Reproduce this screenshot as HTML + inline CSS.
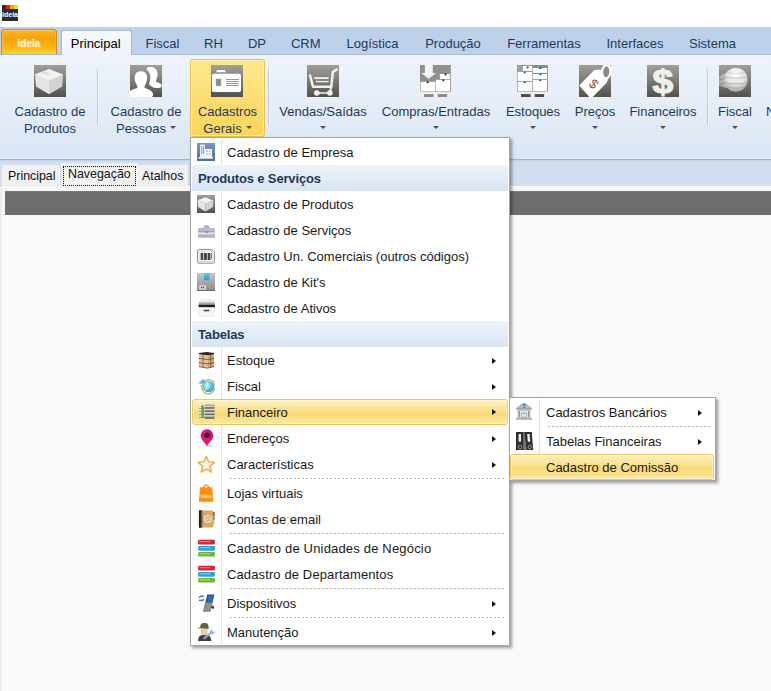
<!DOCTYPE html>
<html lang="pt-BR">
<head>
<meta charset="utf-8">
<title>ideia</title>
<style>
*{box-sizing:border-box;margin:0;padding:0}
html,body{width:771px;height:691px;overflow:hidden;background:#f8f8f8}
body{position:relative;font-family:"Liberation Sans",sans-serif;font-size:13px;color:#1e395b}
.abs{position:absolute}
#title{left:0;top:0;width:771px;height:27px;background:#fff}
#tabs{left:0;top:27px;width:771px;height:28px;background:#bdd1ea}
#rib{left:0;top:54px;width:771px;height:105px;background:linear-gradient(#eef3fa 0,#e6eef8 40%,#dbe6f4 100%);border-top:1px solid #a3bcdc}
#ribline{left:0;top:159px;width:771px;height:1px;background:#9bb4d6}
#ribline2{left:0;top:160px;width:771px;height:3px;background:linear-gradient(#c3d3e8,#d6e2f1)}
#under{left:0;top:163px;width:771px;height:25px;background:#d1deee}
.tab{position:absolute;top:30px;height:24px;line-height:27px;text-align:center;white-space:nowrap;color:#1e395b;font-size:13px}
.rb{position:absolute;top:59px;height:78px;text-align:center;white-space:nowrap;color:#1e395b;font-size:13px;line-height:17px}
.rb .ic{position:absolute;left:50%;margin-left:-16px;top:6px;width:32px;height:32px;background:linear-gradient(#8c8c8c,#6f6f6d 50%,#4f4f4c);overflow:hidden}
.rb .tx{position:absolute;left:-40px;right:-40px;top:44px;line-height:17px}
.hot{background:linear-gradient(#fde88f 0,#fddf77 45%,#fcd458 100%);border:1px solid #e9bf50;border-radius:3px;box-shadow:inset 0 0 0 1px rgba(255,245,200,.6)}
.lt{font-size:12.4px;color:#111;white-space:nowrap}.lt span{position:absolute;line-height:16px}
.hot .ic{top:5px;margin-left:-16.5px}.hot .tx{top:43px}
.rb .nobg{background:none}
.arr{display:inline-block;width:0;height:0;border-left:3px solid transparent;border-right:3px solid transparent;border-top:3.4px solid #505050;vertical-align:middle;margin-left:4px;position:relative;top:-2px}
.sep{position:absolute;top:69px;width:1px;height:56px;background:#b9c9df;box-shadow:1px 0 0 #f4f8fc}
.menu{position:absolute;background:#fff;border:1px solid #a0a6ae;box-shadow:2px 2px 3px rgba(0,0,0,.38)}
.mi{position:absolute;left:1px;height:26px;line-height:26px;color:#1a1a1a;white-space:nowrap}
.mi .t{position:absolute;left:35px;top:1px}
.mi.hl .t{left:34px;top:0}.mi.hl .i{left:4px;top:3px}.mi.hl .sub{top:9px;margin-left:-1px}
.mi .i{position:absolute;left:5px;top:4px;width:18px;height:18px}
.mh{position:absolute;left:1px;height:26px;line-height:28px;letter-spacing:-.15px;background:linear-gradient(#edf3fb,#d9e4f1);font-weight:bold;color:#1e395b;padding-left:6px}
.gut{position:absolute;left:30px;width:1px;background:#dfe3e8}
.ms{position:absolute;height:1px;background-image:repeating-linear-gradient(90deg,#b8b8b8 0,#b8b8b8 2px,transparent 2px,transparent 4px)}
.sub{position:absolute;width:0;height:0;border-top:3.5px solid transparent;border-bottom:3.5px solid transparent;border-left:4px solid #111;top:10.5px}
.hl{background:linear-gradient(#fdf0bf 0,#fbe397 35%,#f9da78 58%,#fbe18e 82%,#fdebab 100%);border:1px solid #efc75c;border-radius:3px;box-shadow:inset 0 0 0 1px rgba(255,250,220,.55)}
</style>
</head>
<body>
<div id="title" class="abs"></div>
<div id="tabs" class="abs"></div>
<div id="rib" class="abs"></div>
<div id="ribline" class="abs"></div>
<div id="ribline2" class="abs"></div>
<div id="under" class="abs"></div>
<svg class="abs" style="left:2px;top:5px" width="16" height="16" viewBox="0 0 16 16"><rect width="16" height="16" fill="#2e2b2c"/><rect x="4" y="0" width="4" height="4" fill="#e8261a"/><rect x="8" y="0" width="4" height="4" fill="#f6a313"/><rect x="12" y="0" width="4" height="4" fill="#f9dc1c"/><text x="8" y="12.4" font-family="Liberation Sans, sans-serif" font-size="8" font-weight="bold" fill="#fff" text-anchor="middle" textLength="16" lengthAdjust="spacingAndGlyphs">ideia</text></svg>

<div class="abs" id="appbtn" style="left:1px;top:29px;width:56px;height:25px;border:1px solid #e1840f;border-bottom:none;border-radius:4px 4px 0 0;background:linear-gradient(#f8b42a 0,#f8a50b 35%,#faae10 65%,#ffd21e 100%);box-shadow:inset 0 1px 0 rgba(255,215,130,.7),inset 1px 0 0 rgba(255,200,90,.5),inset -1px 0 0 rgba(255,200,90,.5);color:#ffefc4;font-weight:bold;font-size:10px;line-height:27px;text-align:center;text-shadow:0 0 2px rgba(255,255,255,.75)">ideia</div>
<div class="abs" id="ptab" style="left:61px;top:30px;width:71px;height:25px;border:1px solid #a3bcdc;border-bottom:none;border-radius:3px 3px 0 0;background:linear-gradient(#f7fafd,#eef3fa)"></div>
<div class="tab" style="left:45.7px;width:100px;color:#000">Principal</div>
<div class="tab" style="left:112.5px;width:100px;color:#1e395b">Fiscal</div>
<div class="tab" style="left:163.5px;width:100px;color:#1e395b">RH</div>
<div class="tab" style="left:207.0px;width:100px;color:#1e395b">DP</div>
<div class="tab" style="left:255.8px;width:100px;color:#1e395b">CRM</div>
<div class="tab" style="left:322.6px;width:100px;color:#1e395b">Logística</div>
<div class="tab" style="left:403.0px;width:100px;color:#1e395b">Produção</div>
<div class="tab" style="left:494.0px;width:100px;color:#1e395b">Ferramentas</div>
<div class="tab" style="left:585.0px;width:100px;color:#1e395b">Interfaces</div>
<div class="tab" style="left:662.5px;width:100px;color:#1e395b">Sistema</div>

<!--RIBBON--><svg width="0" height="0" style="position:absolute"><defs><linearGradient id="gbg" x1="0" y1="0" x2="0" y2="1"><stop offset="0" stop-color="#a09f9a"/><stop offset="0.5" stop-color="#7b7a75"/><stop offset="1" stop-color="#51514c"/></linearGradient></defs></svg>
<div class="rb" style="left:20.0px;width:60px"><svg class="ic" viewBox="0 0 32 32" width="32" height="32"><rect width="32" height="32" fill="url(#gbg)"/><polygon points="15,4 29,9.5 15,15.3 1,9.3" fill="#f3f3f3"/><polygon points="1,9.3 15,15.3 15,29.3 2,21.5" fill="#e4e4e4"/><polygon points="15,15.3 29,9.5 28.3,21.5 15,29.3" fill="#d2d2d2"/><polygon points="6.5,7.2 9.5,6 17,9.2 14,10.6" fill="#dcdcdc"/><path d="M1,9.3 L15,15.3 L29,9.5" stroke="#fafafa" stroke-width=".6" fill="none"/></svg><div class="tx">Cadastro de<br>Produtos</div></div>
<div class="rb" style="left:116.0px;width:60px"><svg class="ic" viewBox="0 0 32 32" width="32" height="32"><rect width="32" height="32" fill="url(#gbg)"/><defs><mask id="mpp"><rect width="32" height="32" fill="#fff"/><path d="M0,32 L0,26 C1,25 4,24 6,23.6 C8,23 7.6,21.5 6.5,19.5 C4,15 4,9.5 7,7.3 C9.5,5.6 13,5.8 15,7.6 C18,10 17.6,15.5 15.3,19.5 C14.2,21.5 14,23 16,23.6 C19,24.3 22,26 23,28.5 C23.3,30 22.8,31 22,32 Z" fill="#000" stroke="#000" stroke-width="6.4"/></mask></defs><path d="M16.5,3.5 C18,1.8 22,1.5 25,3.5 C28,5.5 28.3,10 26.5,14 C25.5,16 25.8,17 27.5,17.6 C30,18.3 31.8,19.5 32,20.5 C32,22.5 29,23.2 26,23 C23,22.8 21,21.5 19,19 Z" fill="#fff" mask="url(#mpp)"/><path d="M0,32 L0,26 C1,25 4,24 6,23.6 C8,23 7.6,21.5 6.5,19.5 C4,15 4,9.5 7,7.3 C9.5,5.6 13,5.8 15,7.6 C18,10 17.6,15.5 15.3,19.5 C14.2,21.5 14,23 16,23.6 C19,24.3 22,26 23,28.5 C23.3,30 22.8,31 22,32 Z" fill="#fff"/></svg><div class="tx">Cadastro de<br>Pessoas<i class='arr'></i></div></div>
<div class="rb hot" style="left:190.0px;width:75px"><svg class="ic" viewBox="0 0 32 32" width="32" height="32"><rect width="32" height="32" fill="url(#gbg)"/><polygon points="5,7.3 6.3,4.9 13.8,4.9 15.1,7.3" fill="#fff"/><rect x="0.9" y="8.8" width="29.1" height="18.3" rx="1.8" fill="#fff"/><rect x="5" y="14" width="4.9" height="6.9" fill="#8f8e8a" stroke="#a5a4a0" stroke-width=".5"/><g fill="#8f8e8a"><rect x="15" y="14.1" width="12.9" height=".9"/><rect x="15" y="16.1" width="12.9" height=".9"/><rect x="15" y="18.1" width="12.9" height=".9"/><rect x="15" y="20.1" width="12.9" height=".9"/></g></svg><div class="tx">Cadastros<br>Gerais<i class='arr'></i></div></div>
<div class="rb" style="left:293.0px;width:60px"><svg class="ic" viewBox="0 0 32 32" width="32" height="32"><rect width="32" height="32" fill="url(#gbg)"/><g fill="none" stroke="#f1f1f1" stroke-linecap="round" stroke-linejoin="round"><path d="M3.1,10.5 L6,21.8 L24.3,21.8 L25.8,6.8 L29.7,4.5" stroke-width="2.5"/><path d="M24.3,21.8 L23,27" stroke-width="2"/><path d="M7.2,13.1 H21.6" stroke-width="1.9" stroke-linecap="butt"/><path d="M9,16.6 H21.6" stroke-width="1.4" stroke-linecap="butt"/><path d="M9.8,28 H22.9" stroke-width="1.7"/></g><circle cx="9.8" cy="28" r="2.8" fill="#f1f1f1"/><circle cx="22.9" cy="28" r="2.8" fill="#f1f1f1"/></svg><div class="tx">Vendas/Saídas<br><i class='arr' style='margin-left:0'></i></div></div>
<div class="rb" style="left:406.0px;width:60px"><svg class="ic nobg" viewBox="0 0 32 32" width="32" height="32"><rect x="0" y="0" width="30.8" height="26.8" fill="#91908b"/><rect x="0" y="26.8" width="30.8" height="5.2" fill="#f0f0f0"/><rect x="4" y="29.1" width="9.6" height="2.9" fill="#8b8a86"/><rect x="17.7" y="29.1" width="9.4" height="2.9" fill="#8b8a86"/><polygon points="4.9,0 12.8,0 12.8,8.1 16.3,8.1 8.6,13.7 1.2,8.1 4.9,8.1" fill="#eef4fc"/><g fill="#fff"><rect x="0.6" y="16.8" width="14.7" height="9.4"/><rect x="15.8" y="14.8" width="14.2" height="11.4"/><rect x="19.9" y="9" width="10.1" height="5"/></g><g fill="#1c1c1c"><circle cx="7.7" cy="17.3" r="1"/><circle cx="23.3" cy="15.3" r="1"/><circle cx="25.5" cy="9.4" r="1"/></g></svg><div class="tx">Compras/Entradas<br><i class='arr' style='margin-left:0'></i></div></div>
<div class="rb" style="left:503.0px;width:60px"><svg class="ic nobg" viewBox="0 0 32 32" width="32" height="32"><rect x="0" y="0" width="30.8" height="26.8" fill="#8c8b87"/><rect x="0.6" y="0.6" width="5.2" height="5.4" fill="#a3a29e"/><rect x="0" y="26.8" width="30.8" height="5.2" fill="#f0f0f0"/><rect x="4" y="29.1" width="9.6" height="2.9" fill="#4b4b47"/><rect x="17.7" y="29.1" width="9.4" height="2.9" fill="#4b4b47"/><g fill="#fff"><rect x="5.9" y="0.9" width="9.3" height="5"/><rect x="0.6" y="6.8" width="14.6" height="9.3"/><rect x="0.6" y="16.9" width="14.6" height="9.3"/><rect x="15.8" y="3" width="14.2" height="4.9"/><rect x="15.8" y="9" width="14.2" height="5"/><rect x="15.8" y="14.8" width="14.2" height="11.4"/></g><g fill="#0b64a0"><ellipse cx="10.6" cy="2.5" rx="1.2" ry=".9"/><ellipse cx="7.7" cy="7.3" rx="1.2" ry=".9"/><ellipse cx="7.7" cy="17.3" rx="1.2" ry=".9"/><ellipse cx="23.5" cy="3.2" rx="1.2" ry=".9"/><ellipse cx="23.5" cy="9.3" rx="1.2" ry=".9"/><ellipse cx="23.3" cy="15.3" rx="1.2" ry=".9"/></g></svg><div class="tx">Estoques<br><i class='arr' style='margin-left:0'></i></div></div>
<div class="rb" style="left:565.0px;width:60px"><svg class="ic" viewBox="0 0 32 32" width="32" height="32"><rect width="32" height="32" fill="url(#gbg)"/><polygon points="15.3,5 21.8,4.6 29.3,13.5 27.4,18 13.8,32 10.4,32 0.8,21.2 0.8,19.8" fill="#fff"/><ellipse cx="27.3" cy="6.8" rx="4.2" ry="6.6" transform="rotate(6 27.3 6.8)" fill="#8b8a85" stroke="#fff" stroke-width="2.3"/><polygon points="19,8 22.6,13.4 28.6,14.8 27.4,18 21,12" fill="#fff"/><text x="14.7" y="19" transform="rotate(40 14.7 19)" font-family="Liberation Sans, sans-serif" font-size="13" fill="#64635f" text-anchor="middle" dominant-baseline="central">$</text></svg><div class="tx">Preços<br><i class='arr' style='margin-left:0'></i></div></div>
<div class="rb" style="left:633.0px;width:60px"><svg class="ic" viewBox="0 0 32 32" width="32" height="32"><rect width="32" height="32" fill="url(#gbg)"/><text x="16" y="27.8" transform="translate(16 0) scale(1.13 1) translate(-16 0)" font-family="Liberation Sans, sans-serif" font-weight="bold" font-size="33" fill="#efefef" stroke="#efefef" stroke-width="1.1" stroke-linejoin="round" text-anchor="middle">$</text></svg><div class="tx">Financeiros<br><i class='arr' style='margin-left:0'></i></div></div>
<div class="rb" style="left:705.0px;width:60px"><svg class="ic" viewBox="0 0 32 32" width="32" height="32"><rect width="32" height="32" fill="url(#gbg)"/><defs><radialGradient id="gsp" cx="0.5" cy="0.3" r="0.75"><stop offset="0" stop-color="#ffffff"/><stop offset="0.55" stop-color="#e1e1e1"/><stop offset="1" stop-color="#9c9c9a"/></radialGradient><linearGradient id="gtail" x1="0" y1="0" x2="1" y2="0"><stop offset="0" stop-color="#c8c8c8" stop-opacity=".55"/><stop offset="1" stop-color="#d8d8d8" stop-opacity=".9"/></linearGradient></defs><path d="M0,12 C4,8 8,7.5 12,7 L12,24 C8,23 4,22 0,21 Z" fill="url(#gtail)"/><ellipse cx="16.9" cy="14.8" rx="11.7" ry="12" fill="url(#gsp)"/><g stroke="#9a9a98" stroke-opacity=".55" fill="none"><path d="M5.5,12 C12,13.6 22,13.6 28.3,12" stroke-width="1"/><path d="M5.3,17.5 C12,19 22,19 28.4,17.5" stroke-width="1.2"/><path d="M7.5,22 C13,23.4 21,23.4 26.4,22" stroke-width=".9"/><path d="M8,7.5 C13,8.8 21,8.8 25.8,7.5" stroke-width=".7"/></g><path d="M0,14.5 L6,13.5 M0,19 L6,18.5" stroke="#777" stroke-opacity=".5" stroke-width="1"/></svg><div class="tx">Fiscal<br><i class='arr' style='margin-left:0'></i></div></div>
<div class="sep" style="left:97px"></div>
<div class="sep" style="left:268px"></div>
<div class="sep" style="left:707px"></div>
<div class="rb" style="left:766px;width:20px"><div class="tx" style="left:0;right:auto;text-align:left">N</div></div>
<!--/RIBBON-->
<!--LOWER--><div class="abs" style="left:0;top:186px;width:771px;height:505px;background:#f9f9f9"></div>
<div class="abs" style="left:0;top:186px;width:771px;height:5px;background:#f6f6f6"></div>
<div class="abs" style="left:0;top:186px;width:2px;height:505px;background:#ededed"></div>
<div class="abs" style="left:2px;top:186px;width:3px;height:30px;background:#f6f6f6"></div>
<div class="abs" style="left:5px;top:191px;width:766px;height:24px;background:#6d6d6d;border-top:1px solid #7a7a7a"></div>
<div class="abs lt" style="left:2px;top:165px;width:58px;height:21px;background:#f0f0f0"><span style="left:6px;top:3px">Principal</span></div>
<div class="abs lt" style="left:61px;top:163px;width:77px;height:25px;background:#f3f3f3"><span style="left:7px;top:3px">Navegação</span><i style="position:absolute;left:2px;top:3px;width:73px;height:20px;border:1px dotted #111"></i></div>
<div class="abs lt" style="left:138px;top:165px;width:50px;height:21px;background:#f0f0f0"><span style="left:4px;top:3px">Atalhos</span></div>
<!--/LOWER-->
<!--MENU--><div class="menu" style="left:190px;top:137px;width:320px;height:509px">
<div class="gut" style="top:1px;height:26px"></div>
<div class="gut" style="top:53px;height:130px"></div>
<div class="gut" style="top:209px;height:298px"></div>
<div class="mi" style="top:1px;width:316px"><svg class="i" viewBox="0 0 18 18" width="18" height="18"><defs><linearGradient id="gb1" x1="0" y1="0" x2="0" y2="1"><stop offset="0" stop-color="#7a97c3"/><stop offset="1" stop-color="#4c6fa3"/></linearGradient></defs><rect width="18" height="18" fill="url(#gb1)"/><rect x="3" y="1.5" width="5" height="13" fill="#e6ecf5"/><rect x="8" y="6" width="7" height="8.5" fill="#f4f7fb"/><rect x="1.5" y="14" width="14.5" height="1.6" fill="#fff"/><g fill="#8ea6cb"><rect x="4.2" y="3" width="1" height="8"/><rect x="6" y="3" width="1" height="8"/><rect x="9.5" y="7.5" width="1.2" height="1.5"/><rect x="12" y="7.5" width="1.2" height="1.5"/><rect x="9.5" y="10.3" width="1.2" height="1.5"/><rect x="12" y="10.3" width="1.2" height="1.5"/></g></svg><span class="t">Cadastro de Empresa</span></div>
<div class="mh" style="top:27px;width:316px">Produtos e Serviços</div>
<div class="mi" style="top:53px;width:316px"><svg class="i" viewBox="0 0 18 18" width="18" height="18"><rect width="18" height="18" fill="url(#gbg)"/><polygon points="8.5,2.3 16.3,5.4 8.5,8.6 0.6,5.3" fill="#f3f3f3"/><polygon points="0.6,5.3 8.5,8.6 8.5,16.5 1.1,12.1" fill="#e4e4e4"/><polygon points="8.5,8.6 16.3,5.4 15.9,12.1 8.5,16.5" fill="#d2d2d2"/></svg><span class="t">Cadastro de Produtos</span></div>
<div class="mi" style="top:79px;width:316px"><svg class="i" viewBox="0 0 18 18" width="18" height="18"><path d="M6.6,7 Q6.8,4.6 9.5,4.6 Q12.3,4.6 12.5,7" fill="#b9bcc6" stroke="#9a9da8" stroke-width=".9"/><rect x="1" y="6.9" width="17" height="9.7" rx=".8" fill="#b8bcc9"/><rect x="1" y="10.3" width="17" height="1.1" fill="#8e9fc4"/><rect x="1" y="11.4" width="17" height="2.2" fill="#e3e4e8"/><rect x="1" y="13.6" width="17" height="3" fill="#b4b5b9"/><rect x="8.4" y="10.2" width="2.2" height="1.8" fill="#7f89a6"/></svg><span class="t">Cadastro de Serviços</span></div>
<div class="mi" style="top:105px;width:316px"><svg class="i" viewBox="0 0 18 18" width="18" height="18"><path d="M2,2.4 H14 L17.6,5.2 V14.6 Q17.6,16.2 16,16.2 H2 Q0.5,16.2 0.5,14.6 V4 Q0.5,2.4 2,2.4 Z" fill="#fff" stroke="#8c8c8c" stroke-width="1"/><path d="M2.6,4 H13.4 L16,6 V14 Q16,14.7 15.3,14.7 H2.6 Q2,14.7 2,14 V4.6 Q2,4 2.6,4 Z" fill="none" stroke="#c9c9c9" stroke-width=".8"/><g fill="#454545"><rect x="3.6" y="6" width="2.6" height="7"/><rect x="6.9" y="6" width="3" height="7"/><rect x="10.6" y="6" width="2.6" height="7"/><rect x="13.6" y="6" width="1.3" height="6.4" fill="#777"/></g></svg><span class="t">Cadastro Un. Comerciais (outros códigos)</span></div>
<div class="mi" style="top:131px;width:316px"><svg class="i" viewBox="0 0 18 18" width="18" height="18"><defs><linearGradient id="gk" x1="0" y1="0" x2="0" y2="1"><stop offset="0" stop-color="#c6c6c6"/><stop offset="1" stop-color="#8b8b8b"/></linearGradient><linearGradient id="gk2" x1="0" y1="0" x2="0" y2="1"><stop offset="0" stop-color="#62c6f2"/><stop offset="1" stop-color="#1a9ce2"/></linearGradient></defs><rect width="18" height="18" fill="url(#gk)"/><rect x="0" y="17" width="18" height="1" fill="#6c6c6c"/><rect x="7.1" y="0" width="5.4" height="7.3" fill="url(#gk2)"/><rect x="2.2" y="12.2" width="6.6" height="4.5" rx=".8" fill="#dedede"/><rect x="3.9" y="13.6" width="1.3" height="1.7" fill="#4a4a4a"/><rect x="5.8" y="13.6" width="1.3" height="1.7" fill="#4a4a4a"/></svg><span class="t">Cadastro de Kit's</span></div>
<div class="mi" style="top:157px;width:316px"><svg class="i" viewBox="0 0 18 18" width="18" height="18"><defs><linearGradient id="gat" x1="0" y1="0" x2="0" y2="1"><stop offset="0" stop-color="#d0d0d0"/><stop offset="1" stop-color="#6e6e6e"/></linearGradient></defs><rect x="2.2" y="0.2" width="15.2" height="3.2" rx="1" fill="#ebebeb"/><rect x="1.8" y="3" width="16" height="3.4" fill="url(#gat)"/><rect x="1.6" y="6" width="16.4" height="2.6" rx=".6" fill="#1f1f1f"/><rect x="1.6" y="8.5" width="16.4" height="9.2" rx="1" fill="#f5f5f5" stroke="#e0e0e0" stroke-width=".5"/><rect x="6.7" y="10.8" width="5.6" height="1.4" rx=".5" fill="#3c3c3c"/></svg><span class="t">Cadastro de Ativos</span></div>
<div class="mh" style="top:183px;width:316px">Tabelas</div>
<div class="mi" style="top:209px;width:316px"><svg class="i" viewBox="0 0 18 18" width="18" height="18"><polygon points="1.8,2 10,1 17,2 17,3.6 10,4.4 1.8,3.4" fill="#2b2521"/><polygon points="1.8,3.3 10.4,4.3 10.4,17.2 1.8,15.6" fill="#e3bf95"/><polygon points="10.4,4.3 17.1,3.5 17.1,15.4 10.4,17.2" fill="#cda677"/><g stroke="#5f4631" stroke-width=".8" fill="none"><path d="M1.8,7.4 L10.4,8.5 L17.1,7.6"/><path d="M1.8,11.6 L10.4,12.8 L17.1,11.6"/><path d="M1.8,15.6 L10.4,17.2 L17.1,15.4"/><path d="M6,3.8 V16.4" stroke-width=".6"/><path d="M13.8,3.9 V16.3" stroke-width=".6"/></g></svg><span class="t">Estoque</span><i class="sub" style="left:300px"></i></div>
<div class="mi" style="top:235px;width:316px"><svg class="i" viewBox="0 0 18 18" width="18" height="18"><defs><radialGradient id="gfi" cx=".4" cy=".4" r=".7"><stop offset="0" stop-color="#e8fbff"/><stop offset=".5" stop-color="#58c6ea"/><stop offset="1" stop-color="#1e94c8"/></radialGradient></defs><ellipse cx="11.6" cy="9.8" rx="6.6" ry="7.2" transform="rotate(20 11.6 9.8)" fill="none" stroke="#c9b548" stroke-width="1.3"/><circle cx="11.4" cy="9.6" r="5.7" fill="url(#gfi)"/><path d="M8,13.5 Q11,9 10.5,5" stroke="#dff6fc" stroke-width="1.2" fill="none" opacity=".8"/><path d="M1.2,7.6 L8.4,5.2 L6.4,1.8 Z" fill="#3fb6e4"/><path d="M2,4.4 L6,3.4 M3,9 L7.4,7.6" stroke="#7fd0ee" stroke-width="1"/></svg><span class="t">Fiscal</span><i class="sub" style="left:300px"></i></div>
<div class="mi hl" style="top:261px;width:316px"><svg class="i" viewBox="0 0 18 18" width="18" height="18"><rect x="1.9" y="2.5" width="5.8" height="12" fill="#e2e3d6"/><rect x="4.4" y="2.5" width="2.4" height="12" fill="#4faa3a"/><g fill="#7d7f6c"><rect x="1.9" y="5.3" width="5.8" height=".7"/><rect x="1.9" y="8.3" width="5.8" height=".7"/><rect x="1.9" y="11.3" width="5.8" height=".7"/><rect x="1.9" y="14.2" width="5.8" height=".7"/></g><rect x="7.8" y="1.7" width="9.6" height="13.9" fill="#87897a"/><g fill="#d9dacd"><rect x="7.8" y="2.6" width="9.6" height="1.4"/><rect x="7.8" y="5.8" width="9.6" height="1.4"/><rect x="7.8" y="9" width="9.6" height="1.4"/><rect x="7.8" y="12.2" width="9.6" height="1.4"/></g><g fill="#5f6153"><rect x="7.8" y="4.6" width="9.6" height=".7"/><rect x="7.8" y="7.8" width="9.6" height=".7"/><rect x="7.8" y="11" width="9.6" height=".7"/><rect x="7.8" y="14.6" width="9.6" height="1"/></g></svg><span class="t">Financeiro</span><i class="sub" style="left:300px"></i></div>
<div class="mi" style="top:287px;width:316px"><svg class="i" viewBox="0 0 18 18" width="18" height="18"><ellipse cx="12" cy="16.8" rx="3.6" ry=".9" fill="#9a9a9a" opacity=".45"/><path d="M9.9,17.6 C8.6,13.4 3.6,11.2 3.6,6.6 A6.3,6.3 0 0 1 16.2,6.6 C16.2,11.2 11.2,13.4 9.9,17.6 Z" fill="#e5127a"/><path d="M9.9,0.3 A6.3,6.3 0 0 1 16.2,6.6 C16.2,9.6 14,11.6 12.4,13.6 C13.6,9.4 13.8,3.8 9.9,0.3Z" fill="#b30d5c" opacity=".5"/><circle cx="9.9" cy="6.3" r="2.7" fill="#26161e"/></svg><span class="t">Endereços</span><i class="sub" style="left:300px"></i></div>
<div class="mi" style="top:313px;width:316px"><svg class="i" viewBox="0 0 18 18" width="18" height="18"><polygon points="9.3,1.3 11.6,6.7 17.5,7.3 13,11.2 14.4,17 9.3,14 4.2,17 5.6,11.2 1.1,7.3 7,6.7" fill="#f5f4f1" stroke="#f4b04c" stroke-width="1.6" stroke-linejoin="round"/></svg><span class="t">Características</span><i class="sub" style="left:300px"></i></div>
<div class="ms" style="left:39px;top:340px;width:275px"></div>
<div class="mi" style="top:342px;width:316px"><svg class="i" viewBox="0 0 18 18" width="18" height="18"><path d="M6.8,4.2 Q6.8,1.2 9.2,1.2 Q11.6,1.2 11.6,4.2" fill="none" stroke="#ff8c0a" stroke-width="1.2"/><path d="M3.2,3.3 H15.2 L16.4,17.8 H1.9 Z" fill="#ff8c0a"/><text x="9.3" y="14.2" font-family="Liberation Sans, sans-serif" font-size="5.6" font-weight="bold" fill="#ffe9cf" text-anchor="middle" textLength="11" lengthAdjust="spacingAndGlyphs">ideia</text></svg><span class="t">Lojas virtuais</span></div>
<div class="mi" style="top:368px;width:316px"><svg class="i" viewBox="0 0 18 18" width="18" height="18"><rect x="4.4" y="0.4" width="11.8" height="17.2" rx=".8" fill="#d3a96a"/><rect x="1.9" y="0.2" width="2.8" height="17.6" fill="#2b2119"/><rect x="4.6" y="0.4" width="1" height="17.2" fill="#8c6b48"/><rect x="16" y="2" width="1.7" height="4" fill="#d9443a"/><rect x="16" y="6.4" width="1.7" height="4" fill="#4a97dc"/><rect x="16" y="10.8" width="1.7" height="4" fill="#ecd23a"/><circle cx="10.8" cy="9" r="4.1" fill="#f3e6cf" opacity=".85"/><text x="10.8" y="11.3" font-family="Liberation Sans, sans-serif" font-size="6.6" fill="#c99a5c" text-anchor="middle">@</text></svg><span class="t">Contas de email</span></div>
<div class="ms" style="left:39px;top:395px;width:275px"></div>
<div class="mi" style="top:397px;width:316px"><svg class="i" viewBox="0 0 18 18" width="18" height="18"><rect x="1.1" y="0.8" width="16.8" height="4.8" rx="1.1" fill="#d8232f"/><rect x="1.1" y="7" width="16.8" height="4.7" rx="1.1" fill="#2b9fdd"/><rect x="1.1" y="13" width="16.8" height="4.6" rx="1.1" fill="#6db72e"/><g fill="#fff" opacity=".38"><rect x="2.4" y="2" width="11" height="1.2"/><rect x="2.4" y="8.2" width="11" height="1.2"/><rect x="2.4" y="14.2" width="11" height="1.2"/></g></svg><span class="t" style="letter-spacing:.18px">Cadastro de Unidades de Negócio</span></div>
<div class="mi" style="top:423px;width:316px"><svg class="i" viewBox="0 0 18 18" width="18" height="18"><rect x="1.1" y="0.8" width="16.8" height="4.8" rx="1.1" fill="#d8232f"/><rect x="1.1" y="7" width="16.8" height="4.7" rx="1.1" fill="#2b9fdd"/><rect x="1.1" y="13" width="16.8" height="4.6" rx="1.1" fill="#6db72e"/><g fill="#fff" opacity=".38"><rect x="2.4" y="2" width="11" height="1.2"/><rect x="2.4" y="8.2" width="11" height="1.2"/><rect x="2.4" y="14.2" width="11" height="1.2"/></g></svg><span class="t" style="letter-spacing:.12px">Cadastro de Departamentos</span></div>
<div class="ms" style="left:39px;top:450px;width:275px"></div>
<div class="mi" style="top:452px;width:316px"><svg class="i" viewBox="0 0 18 18" width="18" height="18"><path d="M12.8,9.2 L17.4,13.2 L16.2,15 L11.6,12.6 Z" fill="#2c2e32"/><polygon points="10.2,0.5 17.5,0.5 13.4,17.5 6.1,17.5" fill="#50545a"/><polygon points="8.3,8.6 15.6,8.6 13.4,17.5 6.1,17.5" fill="#8b8e93"/><polygon points="11.6,2 15.9,2 14.8,7 10.5,7" fill="#1f72d6"/><path d="M1.9,3.6 Q4.4,1 7,2.6 M7.2,5.4 Q4.6,7.4 2,5.8" stroke="#2f7fe0" stroke-width="1.5" fill="none"/></svg><span class="t">Dispositivos</span><i class="sub" style="left:300px"></i></div>
<div class="ms" style="left:39px;top:479px;width:275px"></div>
<div class="mi" style="top:481px;width:316px"><svg class="i" viewBox="0 0 18 18" width="18" height="18"><path d="M1,18 Q1,11.6 7.6,11.6 Q14,11.6 14.4,18 Z" fill="#3d4238"/><rect x="4" y="4.6" width="6.6" height="7.6" rx="2.6" fill="#f0c7a6"/><path d="M0.2,5.6 Q1,4.8 3,4.6 Q3.4,-0.2 7.6,-0.2 Q11.6,-0.2 11.6,4.6 L11.6,6 Q6,4.6 0.2,5.6 Z" fill="#59693a"/><path d="M6.8,15.8 L14,9.6" stroke="#93aede" stroke-width="2"/><path d="M13.2,9.8 Q12.6,7 15.4,6.2 L15.2,8.4 L16.6,9.2 L17.8,7.6 Q18.4,10.6 15.6,11.4 Z" fill="#93aede"/></svg><span class="t">Manutenção</span><i class="sub" style="left:300px"></i></div>
</div>
<!--/MENU-->
<!--SUBMENU--><div class="menu" style="left:509px;top:397px;width:207px;height:84px">
<div class="gut" style="top:1px;height:55px;left:29px"></div>
<div class="mi" style="top:1px;width:203px"><svg class="i" viewBox="0 0 18 18" width="18" height="18"><g transform="translate(-1 -1.4) scale(1 1.09)"><polygon points="9,1 17,6.5 1,6.5" fill="#b9bcc2" stroke="#8c9096" stroke-width=".7"/><rect x="2" y="7" width="14" height="1.3" fill="#9da1a8"/><rect x="2.5" y="8.3" width="13" height="6.5" fill="#e3e5e9"/><g fill="#8f949c"><rect x="3.3" y="8.5" width="1.6" height="6"/><rect x="13.1" y="8.5" width="1.6" height="6"/><rect x="6.3" y="10.2" width="5.4" height="4.6"/></g><rect x="7.2" y="11" width="1.5" height="3" fill="#fff"/><rect x="9.3" y="11" width="1.5" height="3" fill="#fff"/><rect x="1" y="14.8" width="16" height="1.8" fill="#a7abb2"/><text x="9" y="6" font-family="Liberation Sans, sans-serif" font-size="4.5" font-weight="bold" fill="#2c7bc2" text-anchor="middle">$</text></g></svg><span class="t">Cadastros Bancários</span><i class="sub" style="left:187px"></i></div>
<div class="ms" style="left:38px;top:28px;width:162px"></div>
<div class="mi" style="top:30px;width:203px"><svg class="i" viewBox="0 0 18 18" width="18" height="18"><polygon points="7.4,0 8.2,0 10.6,18 7.2,18" fill="#7a7a7a"/><polygon points="0,0 7.6,0 7.4,18 0,18" fill="#2f2f2f"/><polygon points="8.1,0 15.8,0 17.2,18 10.4,18" fill="#2f2f2f"/><rect x="2.6" y="2.1" width="2.4" height="7.6" fill="#f2f2f2"/><polygon points="11.2,2.1 13.6,2.1 14.2,9.7 11.8,9.7" fill="#f2f2f2"/><circle cx="4.1" cy="15" r="1.7" fill="none" stroke="#9a9a9a" stroke-width=".9"/><circle cx="13.7" cy="15" r="1.7" fill="none" stroke="#9a9a9a" stroke-width=".9"/></svg><span class="t">Tabelas Financeiras</span><i class="sub" style="left:187px"></i></div>
<div class="mi hl" style="top:56px;width:204px;left:0"><span class="t" style="left:35px">Cadastro de Comissão</span></div>
</div>
<!--/SUBMENU-->
</body>
</html>
